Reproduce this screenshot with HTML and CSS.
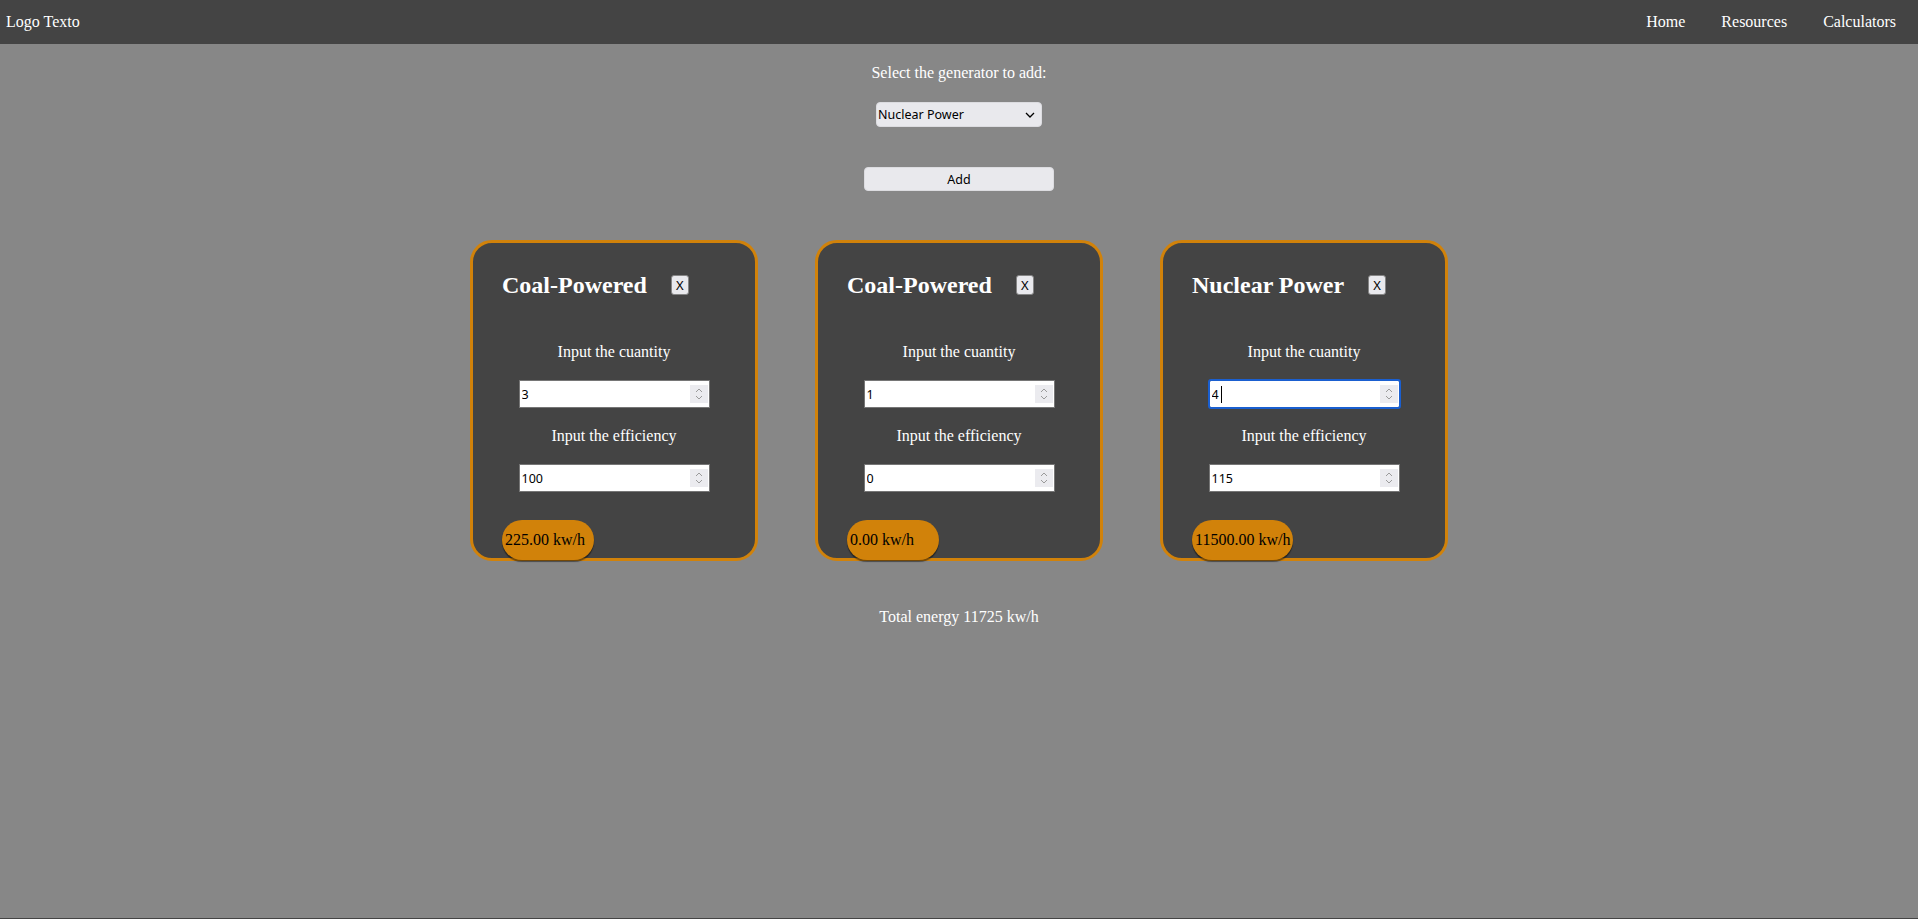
FILE: index.html
```html
<!DOCTYPE html>
<html lang="en">
<head>
<meta charset="utf-8">
<title>Energy Calculator</title>
<link rel="stylesheet" href="styles.css">
</head>
<body>
<header class="topbar">
  <div class="logo">Logo Texto</div>
  <nav class="nav">
    <a href="#">Home</a>
    <a href="#">Resources</a>
    <a href="#">Calculators</a>
  </nav>
</header>
<main class="main">
  <p class="prompt">Select the generator to add:</p>
  <div class="select-wrap">
    <select class="gen-select">
      <option>Coal-Powered</option>
      <option selected>Nuclear Power</option>
    </select>
    <svg class="chev" width="10" height="6" viewBox="0 0 10 6"><path d="M1 1 L5 5 L9 1" fill="none" stroke="#000" stroke-width="1.3"/></svg>
  </div>
  <button class="add-btn">Add</button>
  <section class="cards">
    <div class="card">
      <div class="card-head"><h2>Coal-Powered</h2><button class="close">X</button></div>
      <label class="lbl lbl-first">Input the cuantity</label>
      <div class="num-wrap"><input class="num" type="number" value="3"><span class="spin"><svg width="10" height="14" viewBox="0 0 10 14"><path d="M2 5 L5 2 L8 5 M2 9 L5 12 L8 9" fill="none" stroke="#9a9a9a" stroke-width="1"/></svg></span></div>
      <label class="lbl">Input the efficiency</label>
      <div class="num-wrap"><input class="num" type="number" value="100"><span class="spin"><svg width="10" height="14" viewBox="0 0 10 14"><path d="M2 5 L5 2 L8 5 M2 9 L5 12 L8 9" fill="none" stroke="#9a9a9a" stroke-width="1"/></svg></span></div>
      <div class="pill">225.00 kw/h</div>
    </div>
    <div class="card">
      <div class="card-head"><h2>Coal-Powered</h2><button class="close">X</button></div>
      <label class="lbl lbl-first">Input the cuantity</label>
      <div class="num-wrap"><input class="num" type="number" value="1"><span class="spin"><svg width="10" height="14" viewBox="0 0 10 14"><path d="M2 5 L5 2 L8 5 M2 9 L5 12 L8 9" fill="none" stroke="#9a9a9a" stroke-width="1"/></svg></span></div>
      <label class="lbl">Input the efficiency</label>
      <div class="num-wrap"><input class="num" type="number" value="0"><span class="spin"><svg width="10" height="14" viewBox="0 0 10 14"><path d="M2 5 L5 2 L8 5 M2 9 L5 12 L8 9" fill="none" stroke="#9a9a9a" stroke-width="1"/></svg></span></div>
      <div class="pill">0.00 kw/h</div>
    </div>
    <div class="card">
      <div class="card-head"><h2>Nuclear Power</h2><button class="close">X</button></div>
      <label class="lbl lbl-first">Input the cuantity</label>
      <div class="num-wrap"><input class="num focused" type="number" value="4"><span class="caret"></span><span class="spin"><svg width="10" height="14" viewBox="0 0 10 14"><path d="M2 5 L5 2 L8 5 M2 9 L5 12 L8 9" fill="none" stroke="#9a9a9a" stroke-width="1"/></svg></span></div>
      <label class="lbl">Input the efficiency</label>
      <div class="num-wrap"><input class="num" type="number" value="115"><span class="spin"><svg width="10" height="14" viewBox="0 0 10 14"><path d="M2 5 L5 2 L8 5 M2 9 L5 12 L8 9" fill="none" stroke="#9a9a9a" stroke-width="1"/></svg></span></div>
      <div class="pill">11500.00 kw/h</div>
    </div>
  </section>
  <p class="total">Total energy 11725 kw/h</p>
</main>
<div class="bottom-line"></div>
</body>
</html>
```
FILE: styles.css
```css
* { box-sizing: border-box; }
html, body { margin: 0; padding: 0; }
body {
  background: #878787;
  font-family: "Liberation Serif", "Times New Roman", serif;
  font-size: 16px;
  color: #ffffff;
  min-height: 100vh;
  display: flex;
  flex-direction: column;
}
.topbar {
  height: 44px;
  background: #444444;
  display: flex;
  align-items: center;
  justify-content: space-between;
  padding: 0 22px 0 6px;
}
.logo { line-height: 18px; }
.nav { display: flex; gap: 36px; }
.nav a { color: #ffffff; text-decoration: none; line-height: 18px; }

.main {
  flex: 1;
  display: flex;
  flex-direction: column;
  align-items: center;
  padding-top: 20px;
}
.prompt { margin: 0; line-height: 18px; }
.select-wrap {
  margin-top: 20px;
  position: relative;
  width: 166px;
  height: 25px;
}
.gen-select {
  -webkit-appearance: none;
  appearance: none;
  width: 166px;
  height: 25px;
  background-color: #e9e9ed;
  border: 1px solid #dcdce0;
  border-radius: 4px;
  font-family: "Noto Sans", "Open Sans", sans-serif;
  font-size: 12.5px;
  color: #000;
  padding: 0 0 0 1px;
}
.chev {
  position: absolute;
  right: 7px;
  top: 10px;
  pointer-events: none;
}
.add-btn {
  margin-top: 40px;
  width: 190px;
  height: 24px;
  background: #e9e9ed;
  border: 1px solid #dcdce0;
  border-radius: 4px;
  font-family: "Noto Sans", "Open Sans", sans-serif;
  font-size: 12.5px;
  color: #000;
  padding: 0;
}
.cards {
  margin-top: 49px;
  display: flex;
  gap: 57px;
}
.card {
  width: 288px;
  background: #444444;
  border: 3px solid #d1820a;
  border-radius: 22px;
  padding: 28px 29px 0 29px;
  display: flex;
  flex-direction: column;
}
.card-head {
  display: flex;
  align-items: center;
  gap: 24px;
  height: 28px;
}
.card-head h2 {
  margin: 0;
  font-size: 24px;
  font-weight: bold;
  line-height: 28px;
  color: #ffffff;
}
.close {
  width: 18px;
  height: 20px;
  padding: 0;
  background: #e9e9ed;
  border: 1px solid #858585;
  border-radius: 3px;
  font-family: "Noto Sans", "Open Sans", sans-serif;
  font-size: 13px;
  color: #000;
  line-height: 18px;
}
.lbl {
  display: block;
  text-align: center;
  line-height: 18px;
  margin-top: 19px;
}
.lbl-first { margin-top: 44px; }
.num-wrap {
  margin-top: 19px;
  align-self: center;
  position: relative;
  width: 191px;
  height: 28px;
}
.num {
  -moz-appearance: textfield;
  width: 191px;
  height: 28px;
  border: 1px solid #767676;
  background: #ffffff;
  padding: 0 2px;
  font-family: "Noto Sans", "Open Sans", sans-serif;
  font-size: 12.5px;
  color: #000;
}
.num::-webkit-inner-spin-button,
.num::-webkit-outer-spin-button {
  -webkit-appearance: none;
  margin: 0;
}
.num.focused {
  outline: 2px solid #1a5fd0;
  outline-offset: -1px;
  border-radius: 2px;
}
.caret {
  position: absolute;
  left: 12px;
  top: 6px;
  width: 1px;
  height: 17px;
  background: #000;
}
.spin {
  position: absolute;
  right: 2px;
  top: 5px;
  width: 18px;
  height: 18px;
  background: #ebebef;
  display: flex;
  align-items: center;
  justify-content: center;
  pointer-events: none;
}
.pill {
  align-self: flex-start;
  margin-top: 28px;
  margin-bottom: -2px;
  min-width: 92px;
  height: 40px;
  padding: 0 3px;
  line-height: 40px;
  background: #d1820a;
  color: #000;
  border-radius: 20px;
  box-shadow: 0 2px 1px rgba(0,0,0,0.45);
  white-space: nowrap;
}
.total {
  margin: 47px 0 0;
  line-height: 18px;
}
.bottom-line {
  height: 1px;
  background: #444444;
}
```
